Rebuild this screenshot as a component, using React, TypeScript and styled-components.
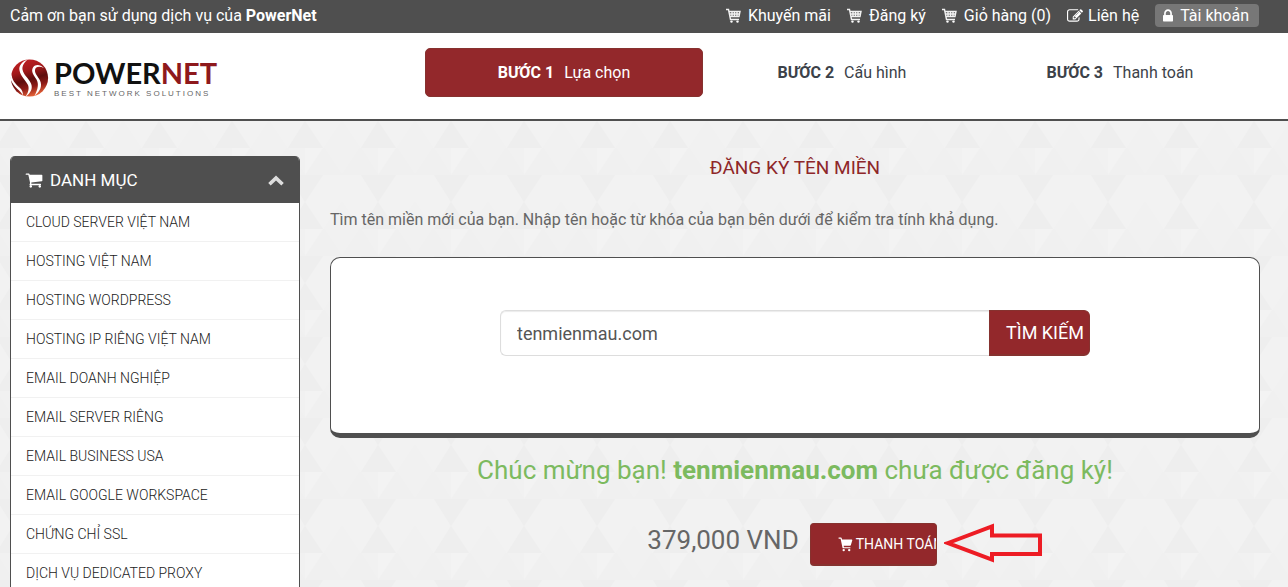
import React from "react";
import styled, { createGlobalStyle, css } from "styled-components";

const dark = "#4f4f4f";
const red = "#93282b";

const GlobalStyle = createGlobalStyle`
  *, *::before, *::after { box-sizing: border-box; }
  body {
    margin: 0;
    background: #f1f1f1;
    color: #666;
    font-family: Roboto, "Liberation Sans", sans-serif;
    font-size: 16px;
    line-height: 24px;
  }
  a { color: inherit; text-decoration: none; }
  ul { list-style: none; margin: 0; padding: 0; }
  h1, h2, p { margin: 0; font-weight: 400; }
  button, input { font-family: inherit; }
`;

const Page = styled.div`
  position: relative;
  min-height: 100vh;
  overflow: hidden;
`;

const Backdrop = styled.svg`
  position: absolute;
  inset: 0;
  width: 100%;
  height: 100%;
  z-index: -1;
`;

const TopBar = styled.div`
  display: flex;
  justify-content: space-between;
  align-items: center;
  height: 33px;
  padding: 0 29px 2px 10px;
  background: ${dark};
  color: #fff;
`;

const Strong = styled.strong`
  font-weight: 700;
`;

const TopNav = styled.nav`
  display: flex;
  align-items: center;
  gap: 16px;
`;

const TopLink = styled.a<{ $gap?: number; $pill?: boolean }>`
  display: flex;
  align-items: center;
  gap: ${(p) => p.$gap ?? 7}px;
  white-space: nowrap;
  ${(p) =>
    p.$pill &&
    css`
      height: 23px;
      padding: 0 10px 0 8px;
      border-radius: 4px;
      background: #777;
    `}
`;

const Header = styled.header`
  display: grid;
  grid-template-columns: 415px 1fr;
  align-items: start;
  height: 88px;
  padding: 15px 29px 0 10px;
  background: #fff;
  border-bottom: 2px solid ${dark};
`;

const Logo = styled.a`
  display: flex;
  gap: 5px;
  padding-top: 10px;
`;

const LogoWords = styled.span`
  display: flex;
  flex-direction: column;
`;

const LogoName = styled.span`
  font-family: Lato, sans-serif;
  font-weight: 700;
  font-size: 29px;
  line-height: 29px;
  color: #111;
`;

const LogoAccent = styled.span`
  color: #8e191c;
`;

const LogoTag = styled.span`
  font-family: "Liberation Sans", sans-serif;
  font-size: 8px;
  line-height: 14px;
  letter-spacing: 2px;
  color: #666;
  white-space: nowrap;
`;

const Steps = styled.ol`
  display: grid;
  grid-template-columns: repeat(3, 1fr);
  margin: 0;
  padding: 0;
  list-style: none;
`;

const Step = styled.li<{ $active?: boolean }>`
  display: flex;
  justify-content: center;
  align-items: center;
  gap: 10px;
  height: 49px;
  border-radius: 5px;
  color: ${(p) => (p.$active ? "#fff" : "#3c4249")};
  background: ${(p) => (p.$active ? red : "transparent")};
  border: 1px solid ${(p) => (p.$active ? "#86322f" : "transparent")};
`;

const Content = styled.div`
  display: grid;
  grid-template-columns: 290px 1fr;
  gap: 30px;
  align-items: start;
  padding: 35px 28px 0 10px;
`;

const Sidebar = styled.aside`
  border: 1px solid ${dark};
  border-top: 0;
  border-radius: 5px 5px 0 0;
  background: #fff;
  overflow: hidden;
`;

const SidebarToggle = styled.button`
  display: flex;
  align-items: center;
  gap: 7px;
  width: 100%;
  height: 47px;
  padding: 1px 15px 0 14px;
  border: 0;
  background: ${dark};
  color: #fff;
  font-size: 17px;
`;

const ToggleText = styled.span`
  flex: 1;
  text-align: left;
`;

const Category = styled.li`
  height: 39px;
  padding-left: 15px;
  border-bottom: 1px solid #f1f1f1;
  font-size: 14px;
  font-weight: 300;
  line-height: 38px;
  color: #222;
`;

const Main = styled.main`
  display: flex;
  flex-direction: column;
`;

const Title = styled.h1`
  font-size: 19px;
  line-height: 24px;
  text-align: center;
  color: #8e2729;
`;

const Intro = styled.p`
  margin-top: 28px;
`;

const SearchPanel = styled.section`
  margin-top: 25px;
  padding: 52px 20px 77px;
  border: 1px solid ${dark};
  border-bottom-width: 5px;
  border-radius: 10px;
  background: #fff;
`;

const SearchForm = styled.form`
  display: flex;
  max-width: 590px;
  margin: 0 auto;
`;

const DomainInput = styled.input`
  flex: 1;
  min-width: 0;
  height: 46px;
  padding: 0 16px;
  border: 1px solid #ddd;
  border-right: 0;
  border-radius: 6px 0 0 6px;
  background: #fff;
  box-shadow: inset 0 1px 1px rgba(0, 0, 0, 0.08);
  color: #555;
  font-size: 18px;
  outline: none;
`;

const RedButton = styled.button`
  border: 1px solid #86322f;
  border-bottom-width: 2px;
  background: ${red};
  color: #fff;
  white-space: nowrap;
  overflow: hidden;
`;

const SearchButton = styled(RedButton)`
  width: 101px;
  height: 46px;
  padding: 0 0 0 16px;
  border-radius: 0 6px 6px 0;
  font-size: 18px;
  text-align: left;
`;

const Success = styled.p`
  margin-top: 16px;
  font-size: 26px;
  line-height: 32px;
  text-align: center;
  color: #7cba5f;
`;

const Purchase = styled.div`
  display: flex;
  justify-content: center;
  align-items: center;
  padding-right: 6px;
  margin-top: 37px;
`;

const Price = styled.span`
  margin: 0 11px 10px 0;
  font-size: 26px;
  line-height: 32px;
`;

const PayAction = styled.div`
  position: relative;
`;

const PayButton = styled(RedButton)`
  display: flex;
  align-items: center;
  gap: 3px;
  width: 127px;
  height: 43px;
  padding: 0 0 0 27px;
  border-radius: 4px;
  font-size: 14px;
`;

const Arrow = styled.svg`
  position: absolute;
  left: 100%;
  top: 0;
  width: 100px;
  height: 40px;
  margin-left: 7px;
`;

const Icon = styled.svg`
  flex: none;
  display: block;
  fill: currentColor;
`;

const GridCart = () => (
  <Icon width="15" height="15" viewBox="0 0 15 15">
    <path
      d="M0 1.500H2.500L4.500 11.500H13M3 3.500H14L13 8.500H4M3.500 6H13.500M6 3.500V8.500M8.500 3.500V8.500M11 3.500V8.500"
      fill="none"
      stroke="#f2f2f2"
      strokeWidth="1.400"
    />
    <circle cx="5.5" cy="13.6" r="1.2" />
    <circle cx="11.5" cy="13.6" r="1.2" />
  </Icon>
);

const SolidCart = ({ size = 18 }: { size?: number }) => (
  <Icon width={size} height={size} viewBox="0 0 1792 1792">
    <path d="M704 1536q0 52-38 90t-90 38-90-38-38-90 38-90 90-38 90 38 38 90zm896 0q0 52-38 90t-90 38-90-38-38-90 38-90 90-38 90 38 38 90zm128-1088v512q0 24-16.5 42.5t-40.5 21.5l-1044 122q13 60 13 70 0 16-24 64h920q26 0 45 19t19 45-19 45-45 19h-1024q-26 0-45-19t-19-45q0-11 8-31.5t16-36 21.5-40 15.5-29.5l-177-823h-204q-26 0-45-19t-19-45 19-45 45-19h256q16 0 28.5 6.5t19.5 15.5 13 24.5 8 26 5.5 29.5 4.5 26h1201q26 0 45 19t19 45z" />
  </Icon>
);

const EditIcon = () => (
  <Icon width="16" height="16" viewBox="0 0 1792 1792">
    <path d="M888 1184l116-116-152-152-116 116v56h96v96h56zm440-720q-16-16-33 1l-350 350q-17 17-1 33t33-1l350-350q17-17 1-33zm80 594v190q0 119-84.5 203.5t-203.5 84.5h-832q-119 0-203.5-84.5t-84.5-203.5v-832q0-119 84.5-203.5t203.5-84.5h832q63 0 117 25 15 7 18 23 3 17-9 29l-49 49q-14 14-32 8-23-6-45-6h-832q-66 0-113 47t-47 113v832q0 66 47 113t113 47h832q66 0 113-47t47-113v-126q0-13 9-22l64-64q15-15 35-7t20 29zm-96-738l288 288-672 672h-288v-288zm444 132l-92 92-288-288 92-92q28-28 68-28t68 28l152 152q28 28 28 68t-28 68z" />
  </Icon>
);

const LockIcon = () => (
  <Icon width="10" height="16" viewBox="320 0 1152 1792">
    <path d="M640 768h512v-192q0-106-75-181t-181-75-181 75-75 181v192zm832 96v576q0 40-28 68t-68 28h-960q-40 0-68-28t-28-68v-576q0-40 28-68t68-28h32v-192q0-184 132-316t316-132 316 132 132 316v192h32q40 0 68 28t28 68z" />
  </Icon>
);

const ChevronUp = () => (
  <Icon width="16" height="11" viewBox="0 0 16 11">
    <path d="M8 0.5L15.8 8.1 13.3 10.6 8 5.4 2.7 10.6 0.2 8.1z" fill="#ddd" />
  </Icon>
);

const PayCart = () => (
  <Icon width="15" height="15" viewBox="0 0 15 15">
    <path d="M0.6 0.6h2.4q.5 0 .7.6l.4 1.3h9.6q.7 0 .6.7l-1.4 4.9q-.2.6-.8.6H5.6l.4 1.5h6.4v1.1H5.2q-.5 0-.7-.6L2.6 1.8h-2z" />
    <circle cx="5.7" cy="13.1" r="1.2" />
    <circle cx="11.2" cy="13.1" r="1.2" />
  </Icon>
);

const Globe = () => (
  <svg width="39" height="40" viewBox="0 0 39 40">
    <defs>
      <linearGradient id="globe" x1="0.3" y1="0" x2="0.6" y2="1">
        <stop offset="0" stopColor="#c01f22" />
        <stop offset="0.3" stopColor="#a3191b" />
        <stop offset="0.55" stopColor="#5e0d0d" />
        <stop offset="0.75" stopColor="#8e1a16" />
        <stop offset="1" stopColor="#ee6a3c" />
      </linearGradient>
    </defs>
    <circle cx="19.5" cy="20" r="18.6" fill="url(#globe)" />
    <path
      d="M18 1.200C12 3.500 8.500 7.500 9.500 12.500C10.500 18 15.500 22 18 27C19.500 31 18 35 15.500 38.800C21 35 23 30 21 25.500C18.500 20 13.500 17 12.500 11.500C12 7.500 14.500 4 18 1.200z"
      fill="#fff"
    />
    <path
      d="M34 10C30 6.500 25.500 6 23 9.500C20.500 13.500 24 17.500 26.500 21.500C29 26 28 31 24.500 38C30.500 33 32.500 28 30 22.500C28 18.500 24.500 15.500 25 12C25.500 8.500 29.500 8 34 10z"
      fill="#fff"
    />
    <path d="M1.500 15C1.500 22 5.500 26 10 30C12 32 13 34 13 37.500C11 32.500 3 29 0.500 21z" fill="#fff" />
  </svg>
);

const Triangles = () => (
  <Backdrop aria-hidden="true">
    <defs>
      <pattern id="tri" x="50" y="13" width="73" height="81" patternUnits="userSpaceOnUse">
        <rect width="73" height="81" fill="#f2f2f2" />
        <path d="M0 27L18 54H0zM73 27L55 54H73z" fill="#f1f1f1" />
        <path d="M0 54H73V81H0z" fill="#f0f0f0" />
        <path d="M0 54H18L0 81zM73 54H55L73 81z" fill="#f1f1f1" />
        <path d="M19 0H54L36 27zM36 27L54 54H19z" fill="#eee" />
        <path d="M19 54H36V81z" fill="#f1f1f1" />
        <path d="M36 54H54L36 81z" fill="#f3f3f3" />
      </pattern>
    </defs>
    <rect width="100%" height="100%" fill="url(#tri)" />
  </Backdrop>
);

const steps = [
  { label: "BƯỚC 1", name: "Lựa chọn" },
  { label: "BƯỚC 2", name: "Cấu hình" },
  { label: "BƯỚC 3", name: "Thanh toán" },
];

const categories = [
  "CLOUD SERVER VIỆT NAM",
  "HOSTING VIỆT NAM",
  "HOSTING WORDPRESS",
  "HOSTING IP RIÊNG VIỆT NAM",
  "EMAIL DOANH NGHIỆP",
  "EMAIL SERVER RIÊNG",
  "EMAIL BUSINESS USA",
  "EMAIL GOOGLE WORKSPACE",
  "CHỨNG CHỈ SSL",
  "DỊCH VỤ DEDICATED PROXY",
];

export default function App() {
  return (
    <Page>
      <GlobalStyle />
      <Triangles />
      <TopBar>
        <span>
          Cảm ơn bạn sử dụng dịch vụ của <Strong>PowerNet</Strong>
        </span>
        <TopNav>
          <TopLink href="#promo"><GridCart />Khuyến mãi</TopLink>
          <TopLink href="#register"><GridCart />Đăng ký</TopLink>
          <TopLink href="#cart"><GridCart />Giỏ hàng (0)</TopLink>
          <TopLink href="#contact" $gap={5}><EditIcon />Liên hệ</TopLink>
          <TopLink href="#account" $pill><LockIcon />Tài khoản</TopLink>
        </TopNav>
      </TopBar>
      <Header>
        <Logo href="#home" aria-label="PowerNet">
          <Globe />
          <LogoWords>
            <LogoName>POWER<LogoAccent>NET</LogoAccent></LogoName>
            <LogoTag>BEST NETWORK SOLUTIONS</LogoTag>
          </LogoWords>
        </Logo>
        <Steps>
          {steps.map((s, i) => (
            <Step key={s.label} $active={i === 0}>
              <Strong>{s.label}</Strong>
              <span>{s.name}</span>
            </Step>
          ))}
        </Steps>
      </Header>
      <Content>
        <Sidebar>
          <SidebarToggle type="button" aria-expanded="true">
            <SolidCart />
            <ToggleText>DANH MỤC</ToggleText>
            <ChevronUp />
          </SidebarToggle>
          <ul>
            {categories.map((c) => (
              <Category key={c}><a href="#category">{c}</a></Category>
            ))}
          </ul>
        </Sidebar>
        <Main>
          <Title>ĐĂNG KÝ TÊN MIỀN</Title>
          <Intro>
            Tìm tên miền mới của bạn. Nhập tên hoặc từ khóa của bạn bên dưới để kiểm tra tính khả dụng.
          </Intro>
          <SearchPanel>
            <SearchForm onSubmit={(e) => e.preventDefault()}>
              <DomainInput type="text" aria-label="Tên miền" defaultValue="tenmienmau.com" />
              <SearchButton type="submit">TÌM KIẾM</SearchButton>
            </SearchForm>
          </SearchPanel>
          <Success>
            Chúc mừng bạn! <Strong>tenmienmau.com</Strong> chưa được đăng ký!
          </Success>
          <Purchase>
            <Price>379,000 VND</Price>
            <PayAction>
              <PayButton type="button"><PayCart />THANH TOÁN</PayButton>
              <Arrow viewBox="0 0 100 40" aria-hidden="true">
                <path
                  d="M4 20L48 3.500V12.500H96V31H48V36.500z"
                  fill="none"
                  stroke="#ed1c24"
                  strokeWidth="4"
                />
              </Arrow>
            </PayAction>
          </Purchase>
        </Main>
      </Content>
    </Page>
  );
}
